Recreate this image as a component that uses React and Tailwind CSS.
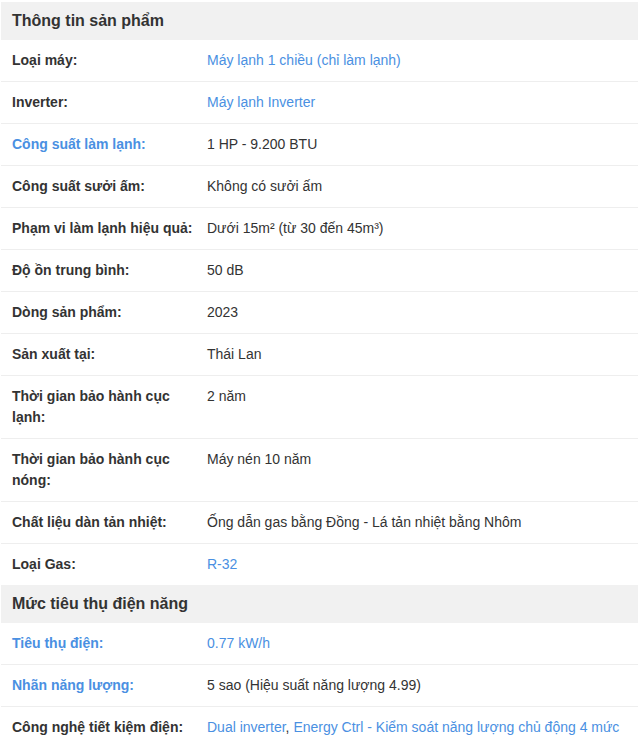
import React from "react";

const B = "text-[#4a90e2]";

const groups = [
  {
    title: "Thông tin sản phẩm",
    rows: [
      { label: "Loại máy:", value: <span className={B}>Máy lạnh 1 chiều (chỉ làm lạnh)</span> },
      { label: "Inverter:", value: <span className={B}>Máy lạnh Inverter</span> },
      { label: "Công suất làm lạnh:", blue: true, value: "1 HP - 9.200 BTU" },
      { label: "Công suất sưởi ấm:", value: "Không có sưởi ấm" },
      { label: "Phạm vi làm lạnh hiệu quả:", value: "Dưới 15m² (từ 30 đến 45m³)" },
      { label: "Độ ồn trung bình:", value: "50 dB" },
      { label: "Dòng sản phẩm:", value: "2023" },
      { label: "Sản xuất tại:", value: "Thái Lan" },
      { label: "Thời gian bảo hành cục lạnh:", value: "2 năm" },
      { label: "Thời gian bảo hành cục nóng:", value: "Máy nén 10 năm" },
      { label: "Chất liệu dàn tản nhiệt:", value: "Ống dẫn gas bằng Đồng - Lá tản nhiệt bằng Nhôm" },
      { label: "Loại Gas:", value: <span className={B}>R-32</span> },
    ],
  },
  {
    title: "Mức tiêu thụ điện năng",
    rows: [
      { label: "Tiêu thụ điện:", blue: true, value: <span className={B}>0.77 kW/h</span> },
      { label: "Nhãn năng lượng:", blue: true, value: "5 sao (Hiệu suất năng lượng 4.99)" },
      {
        label: "Công nghệ tiết kiệm điện:",
        value: (
          <>
            <span className={B}>Dual inverter</span>, <span className={B}>Energy Ctrl - Kiểm soát năng lượng chủ động 4 mức</span>
          </>
        ),
      },
    ],
  },
];

export default function App() {
  return (
    <div className="bg-white w-[639px] h-[748px] overflow-hidden pt-[2px] pl-[1px] pr-[1px] text-[#333] text-[14px]" style={{ fontFamily: '"Liberation Sans", Arial, sans-serif' }}>
      {groups.map((g) => (
        <div key={g.title}>
          <div className="bg-[#f1f1f1] h-[38px] flex items-center pl-[11px] text-[16px] font-bold leading-[20px]">
            {g.title}
          </div>
          {g.rows.map((r, i) => (
            <div
              key={r.label}
              className={`flex leading-[21px] ${i < g.rows.length - 1 ? "border-b border-[#eeeeee]" : ""}`}
            >
              <div className={`w-[206px] shrink-0 pl-[11px] pr-[12px] py-[10px] font-bold ${r.blue ? "text-[#4a90e2]" : ""}`}>
                {r.label}
              </div>
              <div className="flex-1 py-[10px] pr-[10px]">{r.value}</div>
            </div>
          ))}
        </div>
      ))}
    </div>
  );
}
